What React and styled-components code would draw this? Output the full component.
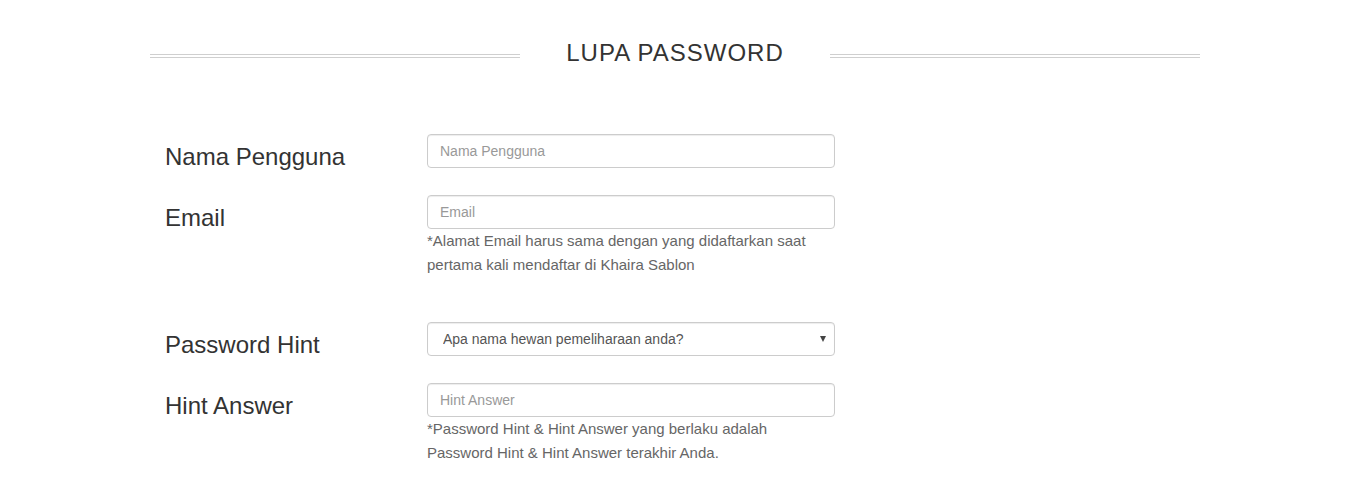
import React from 'react'
import styled, { createGlobalStyle } from 'styled-components'

const GlobalStyle = createGlobalStyle`
  html, body {
    margin: 0;
    padding: 0;
    background: #fff;
  }
  body {
    font-family: 'Liberation Sans', Arial, sans-serif;
    color: #333;
  }
  * {
    box-sizing: border-box;
  }
`

const Page = styled.div`
  width: 1050px;
  margin-left: 150px;
  padding-top: 38px;
`

const Header = styled.div`
  display: flex;
  align-items: flex-start;
`

const Line = styled.div`
  flex: 1;
  height: 4px;
  margin-top: 16px;
  border-top: 1px solid #cfcfcf;
  border-bottom: 1px solid #cfcfcf;
`

const Title = styled.h2`
  margin: 0;
  padding: 0 46px;
  font-size: 24px;
  line-height: 30px;
  font-weight: 400;
  letter-spacing: 1px;
  color: #333;
  white-space: nowrap;
`

const Form = styled.form`
  margin-top: 66px;
`

const Row = styled.div`
  display: grid;
  grid-template-columns: 262px 438px;
  margin-bottom: 21px;
`

const Label = styled.label`
  padding: 6px 15px 0;
  font-size: 24px;
  line-height: 34px;
  color: #333;
`

const Field = styled.div`
  position: relative;
  padding: 0 15px;
`

const Input = styled.input`
  display: block;
  width: 100%;
  height: 34px;
  padding: 6px 12px;
  font-family: inherit;
  font-size: 14px;
  color: #555;
  background: #fff;
  border: 1px solid #ccc;
  border-radius: 4px;
  box-shadow: inset 0 1px 1px rgba(0, 0, 0, 0.075);
  outline: none;

  &::placeholder {
    color: #999;
  }
`

const Select = styled.select`
  display: block;
  width: 100%;
  height: 34px;
  padding: 6px 15px;
  font-family: inherit;
  font-size: 14px;
  color: #555;
  background: #fff;
  border: 1px solid #ccc;
  border-radius: 4px;
  box-shadow: inset 0 1px 1px rgba(0, 0, 0, 0.075);
  appearance: none;
  outline: none;
`

const Caret = styled.span`
  position: absolute;
  right: 24px;
  top: 14px;
  width: 0;
  height: 0;
  border-left: 3px solid transparent;
  border-right: 3px solid transparent;
  border-top: 6px solid #444;
  pointer-events: none;
`

const Help = styled.p`
  margin: 0 0 ${p => p.$space || 0}px;
  font-size: 15px;
  line-height: 24px;
  color: #666;
`

export default function App() {
  return (
    <>
      <GlobalStyle />
      <Page>
        <Header>
          <Line />
          <Title>LUPA PASSWORD</Title>
          <Line />
        </Header>
        <Form onSubmit={e => e.preventDefault()}>
          <Row>
            <Label>Nama Pengguna</Label>
            <Field>
              <Input type="text" placeholder="Nama Pengguna" />
            </Field>
          </Row>
          <Row>
            <Label>Email</Label>
            <Field>
              <Input type="email" placeholder="Email" />
              <Help $space={24}>
                *Alamat Email harus sama dengan yang didaftarkan saat
                <br />
                pertama kali mendaftar di Khaira Sablon
              </Help>
            </Field>
          </Row>
          <Row>
            <Label>Password Hint</Label>
            <Field>
              <Select defaultValue="pet">
                <option value="pet">Apa nama hewan pemeliharaan anda?</option>
                <option value="mother">Siapa nama gadis ibu anda?</option>
                <option value="city">Di kota mana anda lahir?</option>
              </Select>
              <Caret />
            </Field>
          </Row>
          <Row>
            <Label>Hint Answer</Label>
            <Field>
              <Input type="text" placeholder="Hint Answer" />
              <Help>
                *Password Hint &amp; Hint Answer yang berlaku adalah
                <br />
                Password Hint &amp; Hint Answer terakhir Anda.
              </Help>
            </Field>
          </Row>
        </Form>
      </Page>
    </>
  )
}
